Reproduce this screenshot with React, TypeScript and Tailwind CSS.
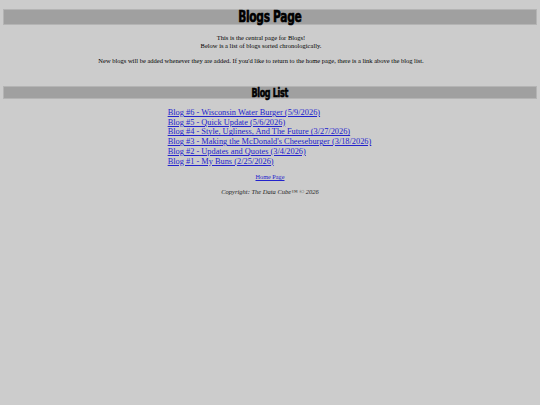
import React from 'react';

const blogs = [
  'Blog #6 - Wisconsin Water Burger (5/9/2026)',
  'Blog #5 - Quick Update (5/6/2026)',
  'Blog #4 - Style, Ugliness, And The Future (3/27/2026)',
  "Blog #3 - Making the McDonald's Cheeseburger (3/18/2026)",
  'Blog #2 - Updates and Quotes (3/4/2026)',
  'Blog #1 - My Buns (2/25/2026)',
];

// Impact-ish look from a condensed bold face, squeezed a bit more
const headingFont =
  "inline-block font-['DejaVu_Sans_Condensed',sans-serif] font-bold text-black [-webkit-text-stroke:0.6px_#000] tracking-[-0.4px] scale-x-[0.74]";

const App: React.FC = () => {
  return (
    <div className="min-h-[405px] w-full bg-[#cccccc] pt-[9px] px-[3px] font-['Liberation_Serif',serif] text-black">
      <div className="h-[16px] border border-[#b4b4b4] bg-[#a0a0a0] flex items-center justify-center">
        <h1 className={`${headingFont} text-[16px] leading-none`}>Blogs Page</h1>
      </div>

      <div className="mt-[9px] pr-[18px] text-center text-[6.5px] leading-[7.5px]">
        <p>
          This is the central page for Blogs!
          <br />
          Below is a list of blogs sorted chronologically.
        </p>
        <p className="mt-[7.5px]">
          New blogs will be added whenever they are added. If you'd like to return to the home page, there is a link
          above the blog list.
        </p>
      </div>

      <div className="mt-[22px] h-[13px] border border-[#b4b4b4] bg-[#a0a0a0] flex items-center justify-center">
        <h2 className={`${headingFont} text-[12px] leading-none`}>Blog List</h2>
      </div>

      <div className="mt-[9px] flex justify-center pr-[1px]">
        <ul className="text-[8.35px] leading-[9.7px]">
          {blogs.map((b) => (
            <li key={b}>
              <a href="#" className="text-[#2323cc] underline">
                {b}
              </a>
            </li>
          ))}
        </ul>
      </div>

      <div className="mt-[7px] text-center text-[6.25px] leading-[8px]">
        <a href="#" className="text-[#2323cc] underline">
          Home Page
        </a>
      </div>
      <p className="mt-[6.5px] text-center text-[6.5px] leading-[8px] italic text-[#222]">
        Copyright: The Data Cube™ © 2026
      </p>
    </div>
  );
};

export default App;
